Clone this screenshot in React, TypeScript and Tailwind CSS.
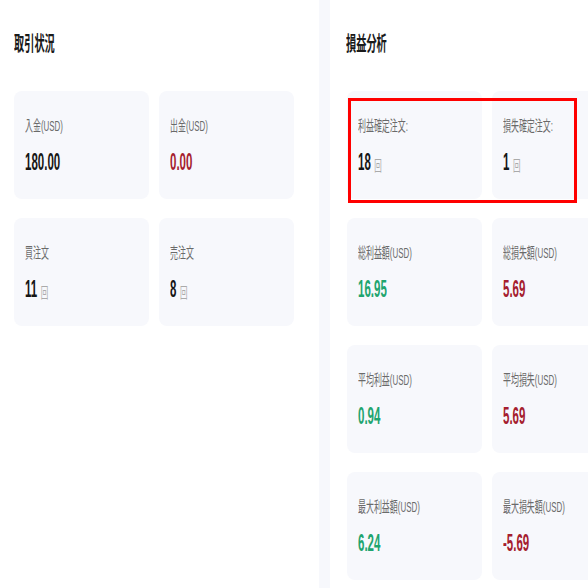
import React from "react";

type Card = { label: string; value: string; unit?: string; color?: string };

const left: Card[][] = [
  [
    { label: "入金(USD)", value: "180.00", color: "text-[#161616]" },
    { label: "出金(USD)", value: "0.00", color: "text-[#a51d2f]" },
  ],
  [
    { label: "買注文", value: "11", unit: "回", color: "text-[#161616]" },
    { label: "売注文", value: "8", unit: "回", color: "text-[#161616]" },
  ],
];

const right: Card[][] = [
  [
    { label: "利益確定注文:", value: "18", unit: "回", color: "text-[#161616]" },
    { label: "損失確定注文:", value: "1", unit: "回", color: "text-[#161616]" },
  ],
  [
    { label: "総利益額(USD)", value: "16.95", color: "text-[#1fa56f]" },
    { label: "総損失額(USD)", value: "5.69", color: "text-[#a51d2f]" },
  ],
  [
    { label: "平均利益(USD)", value: "0.94", color: "text-[#1fa56f]" },
    { label: "平均損失(USD)", value: "5.69", color: "text-[#a51d2f]" },
  ],
  [
    { label: "最大利益額(USD)", value: "6.24", color: "text-[#1fa56f]" },
    { label: "最大損失額(USD)", value: "-5.69", color: "text-[#a51d2f]" },
  ],
];

function StatCard({ c }: { c: Card }) {
  return (
    <div className="w-[135px] h-[108px] shrink-0 rounded-lg bg-[#f7f8fc] pl-[11px] pt-[25px] flex flex-col">
      <div className="origin-left scale-x-[0.53] whitespace-nowrap text-[15px] leading-[20px] text-[#6a6a6a]">
        {c.label}
      </div>
      <div className="mt-[13px] origin-left scale-x-[0.5] whitespace-nowrap flex items-end">
        <span className={`text-[23px] leading-[27px] font-bold ${c.color}`}>{c.value}</span>
        {c.unit && (
          <span className="ml-[7px] text-[15px] leading-[21px] text-[#aaaaaa]">{c.unit}</span>
        )}
      </div>
    </div>
  );
}

function Title({ text }: { text: string }) {
  return (
    <div className="h-[24px] origin-left scale-x-[0.51] whitespace-nowrap text-[20px] leading-[24px] font-bold text-[#1a1a1a]">
      {text}
    </div>
  );
}

export default function App() {
  return (
    <div
      className="w-[588px] h-[588px] overflow-hidden bg-[#f7f8fc] flex"
      style={{ fontFamily: '"Liberation Sans", "Noto Sans CJK JP", sans-serif' }}
    >
      <div className="w-[319px] h-full bg-white shrink-0 pl-[14px] pt-[32px]">
        <Title text="取引状況" />
        <div className="mt-[35px] flex flex-col gap-[19px]">
          {left.map((row, i) => (
            <div key={i} className="flex gap-[10px]">
              {row.map((c) => (
                <StatCard key={c.label} c={c} />
              ))}
            </div>
          ))}
        </div>
      </div>
      <div className="relative ml-[11px] h-full flex-1 bg-white pl-[16px] pt-[32px] overflow-hidden">
        <Title text="損益分析" />
        <div className="mt-[35px] pl-[1px] flex flex-col gap-[19px]">
          {right.map((row, i) => (
            <div key={i} className="flex gap-[10px]">
              {row.map((c) => (
                <StatCard key={c.label} c={c} />
              ))}
            </div>
          ))}
        </div>
        <div className="absolute left-[18px] top-[98px] w-[229px] h-[105px] border-[3px] border-[#ff0000]" />
      </div>
    </div>
  );
}
